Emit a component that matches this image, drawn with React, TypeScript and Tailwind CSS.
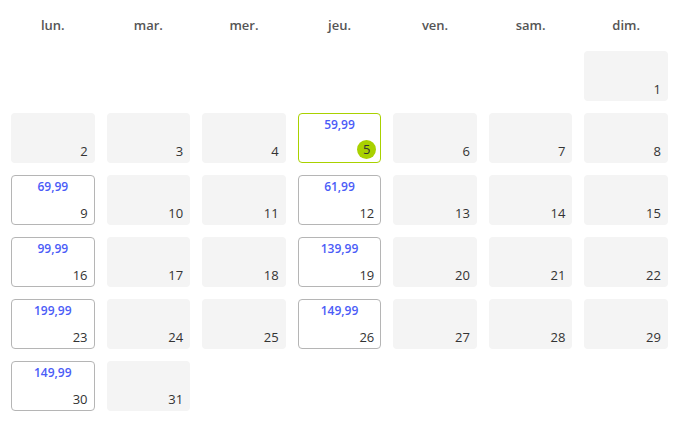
import React from 'react';

const DAYS = ['lun.', 'mar.', 'mer.', 'jeu.', 'ven.', 'sam.', 'dim.'];

// prices per day of month
const PRICES: Record<number, string> = {
  5: '59,99',
  9: '69,99',
  12: '61,99',
  16: '99,99',
  19: '139,99',
  23: '199,99',
  26: '149,99',
  30: '149,99',
};

const TODAY = 5;
const OFFSET = 6; // month starts on sunday

const DayCell: React.FC<{ day: number }> = ({ day }) => {
  const price = PRICES[day];
  const isToday = day === TODAY;

  if (!price) {
    return (
      <div className="h-[50px] rounded bg-[#f4f4f4] flex items-end justify-end px-[7px] pb-[3px]">
        <span className="text-[13px] leading-[18px] text-[#333]">{day}</span>
      </div>
    );
  }

  return (
    <div
      className={
        isToday
          ? 'h-[50px] rounded border border-[#a9d100] bg-white flex flex-col justify-between px-[4px] pt-[3px] pb-[3px]'
          : 'h-[50px] rounded border border-[#b5b5b5] bg-white flex flex-col justify-between px-[6px] pt-[3px] pb-[2px]'
      }
    >
      <div className="text-center text-[12px] leading-[16px] font-semibold text-[#4b5cf7]">{price}</div>
      <div className="flex justify-end">
        {isToday ? (
          <span className="w-[19px] h-[19px] rounded-full bg-[#a9d100] flex items-center justify-center text-[13px] leading-none text-[#333]">
            {day}
          </span>
        ) : (
          <span className="text-[13px] leading-[18px] text-[#333]">{day}</span>
        )}
      </div>
    </div>
  );
};

const App: React.FC = () => {
  const cells: (number | null)[] = [
    ...Array.from({ length: OFFSET }, () => null),
    ...Array.from({ length: 31 }, (_, i) => i + 1),
  ];

  return (
    <div className="w-[679px] h-[431px] bg-white px-[11px] pt-[16px]" style={{ fontFamily: '"Open Sans", "Noto Sans", sans-serif' }}>
      {/* Weekday header */}
      <div className="grid grid-cols-7 gap-x-3 mb-[17px]">
        {DAYS.map(d => (
          <div key={d} className="text-center text-[13px] leading-[18px] font-semibold text-[#555]">
            {d}
          </div>
        ))}
      </div>

      {/* Days grid */}
      <div className="grid grid-cols-7 gap-3">
        {cells.map((day, i) =>
          day === null ? <div key={`e${i}`} className="h-[50px]" /> : <DayCell key={day} day={day} />
        )}
      </div>
    </div>
  );
};

export default App;
